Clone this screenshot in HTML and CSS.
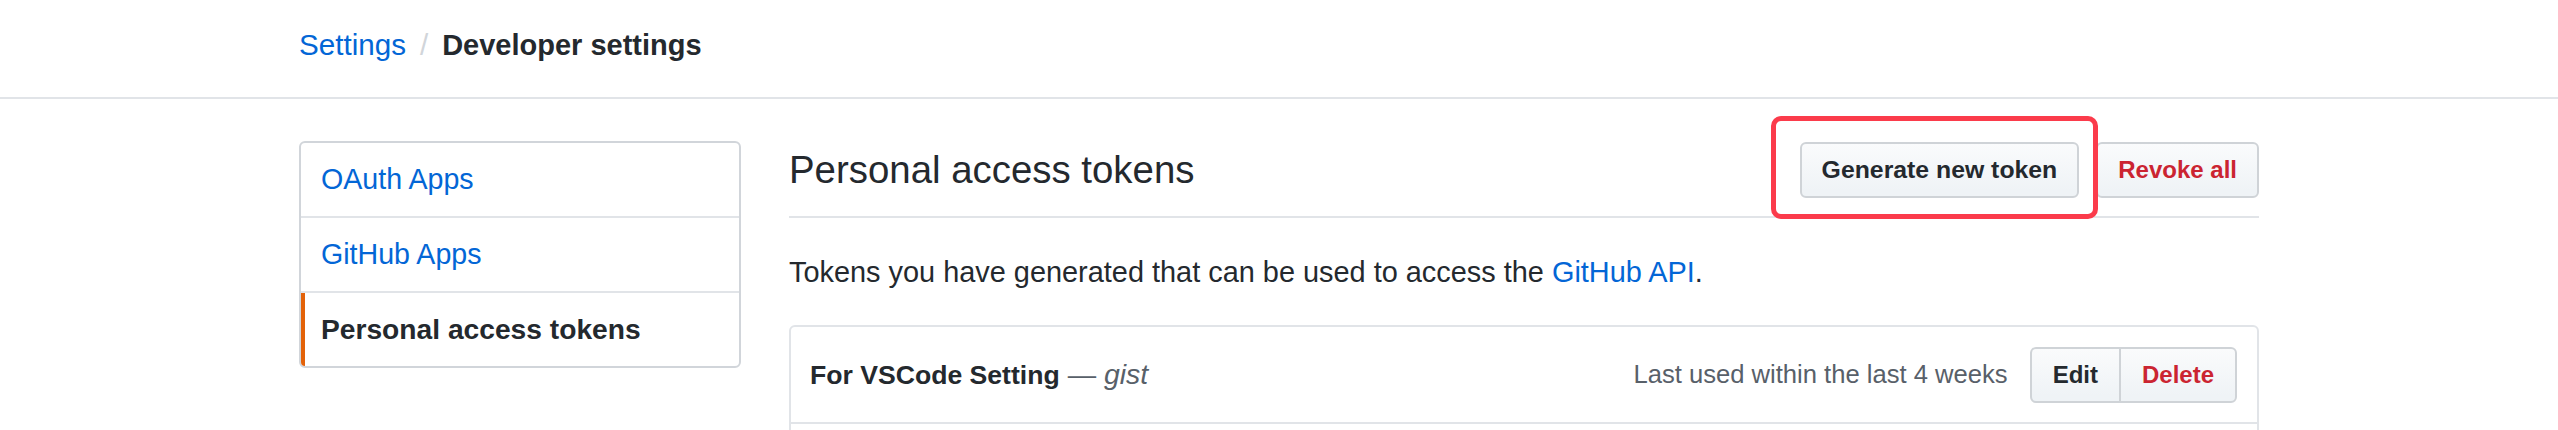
FILE: index.html
```html
<!DOCTYPE html>
<html lang="en">
<head>
<meta charset="utf-8">
<title>Personal access tokens</title>
<link rel="stylesheet" href="styles.css">
</head>
<body>
  <header class="header">
    <nav class="crumbs">
      <a class="crumb-link" href="#">Settings</a>
      <span class="crumb-sep">/</span>
      <strong class="crumb-current">Developer settings</strong>
    </nav>
  </header>

  <div class="layout">
    <aside class="sidebar">
      <nav class="menu">
        <a class="menu-item" href="#">OAuth Apps</a>
        <a class="menu-item" href="#">GitHub Apps</a>
        <a class="menu-item selected" href="#">Personal access tokens</a>
      </nav>
    </aside>

    <main class="main">
      <div class="subhead">
        <h2 class="subhead-heading">Personal access tokens</h2>
        <div class="actions">
          <div class="hl-wrap">
            <button class="btn btn-generate" type="button">Generate new token</button>
            <span class="highlight"></span>
          </div>
          <button class="btn btn-danger" type="button">Revoke all</button>
        </div>
      </div>

      <p class="lead">Tokens you have generated that can be used to access the <a class="link" href="#">GitHub API</a>.</p>

      <div class="box">
        <div class="token-row">
          <div class="token-title">
            <strong class="token-name">For VSCode Setting</strong>
            <span class="token-scope">— <em>gist</em></span>
          </div>
          <div class="token-meta">
            <span class="last-used">Last used within the last 4 weeks</span>
            <div class="btn-group">
              <button class="btn" type="button">Edit</button>
              <button class="btn btn-danger" type="button">Delete</button>
            </div>
          </div>
        </div>
      </div>
    </main>
  </div>
</body>
</html>
```

FILE: styles.css
```css
* {
  box-sizing: border-box;
}

body {
  margin: 0;
  background: #ffffff;
  color: #24292e;
  font-family: "Liberation Sans", Arial, Helvetica, sans-serif;
}

a {
  text-decoration: none;
}

/* Header / breadcrumbs */
.header {
  height: 99px;
  border-bottom: 2px solid #e1e4e8;
}

.crumbs {
  width: 1960px;
  margin: 0 auto;
  padding-top: 25px;
  display: flex;
  align-items: baseline;
  font-size: 29.6px;
  line-height: 40px;
}

.crumb-link {
  color: #0366d6;
}

.crumb-sep {
  color: #d1d5da;
  margin: 0 14px;
}

.crumb-current {
  font-weight: bold;
  font-size: 29px;
  color: #24292e;
}

/* Layout */
.layout {
  width: 1960px;
  margin: 0 auto;
  padding-top: 42px;
  display: grid;
  grid-template-columns: 490px 1470px;
}

/* Sidebar menu */
.menu {
  width: 442px;
  border: 2px solid #d1d5da;
  border-radius: 6px;
  overflow: hidden;
  display: flex;
  flex-direction: column;
}

.menu-item {
  position: relative;
  display: block;
  padding: 16px 20px;
  font-size: 28.6px;
  line-height: 41px;
  color: #0366d6;
  border-bottom: 2px solid #e1e4e8;
}

.menu-item:last-child {
  border-bottom: none;
}

.menu-item.selected {
  color: #24292e;
  font-weight: bold;
  font-size: 28.2px;
}

.menu-item.selected::before {
  content: "";
  position: absolute;
  left: 0;
  top: 0;
  bottom: 0;
  width: 4px;
  background: #e36209;
}

/* Subhead */
.subhead {
  display: flex;
  align-items: center;
  justify-content: space-between;
  height: 77px;
  padding-bottom: 17px;
  border-bottom: 2px solid #e1e4e8;
}

.subhead-heading {
  margin: 0;
  font-size: 38.4px;
  font-weight: normal;
  line-height: 58px;
  color: #24292e;
}

.actions {
  display: flex;
  align-items: center;
  gap: 17px;
}

.hl-wrap {
  position: relative;
  display: flex;
}

.highlight {
  position: absolute;
  top: -26px;
  left: -29px;
  right: -19px;
  bottom: -21px;
  border: 5px solid #fb3b4b;
  border-radius: 10px;
  pointer-events: none;
}

/* Buttons */
.btn {
  display: inline-block;
  margin: 0;
  padding: 6px 20px;
  font-family: inherit;
  font-size: 24px;
  font-weight: bold;
  line-height: 40px;
  color: #24292e;
  white-space: nowrap;
  background-color: #eff3f6;
  background-image: linear-gradient(-180deg, #fafbfc 0%, #eff3f6 90%);
  border: 2px solid #cfd3d7;
  border-radius: 6px;
  cursor: pointer;
}

.btn-generate {
  font-size: 24.8px;
}

.btn-danger {
  color: #cb2431;
}

.btn-group {
  display: flex;
}

.btn-group .btn:first-child {
  border-radius: 6px 0 0 6px;
}

.btn-group .btn + .btn {
  margin-left: -2px;
  border-radius: 0 6px 6px 0;
}

/* Lead text */
.lead {
  margin: 34px 0 33px;
  font-size: 28.9px;
  line-height: 40px;
  color: #24292e;
}

.link {
  color: #0366d6;
}

/* Token list */
.box {
  min-height: 200px;
  border: 2px solid #e1e4e8;
  border-radius: 6px;
}

.token-row {
  display: flex;
  align-items: center;
  justify-content: space-between;
  height: 97px;
  padding: 0 20px 0 19px;
  border-bottom: 2px solid #e1e4e8;
}

.token-title {
  display: flex;
  align-items: baseline;
  gap: 8px;
}

.token-name {
  font-size: 26.6px;
  font-weight: bold;
  color: #24292e;
}

.token-scope {
  font-size: 28.4px;
  color: #586069;
}

.token-meta {
  display: flex;
  align-items: center;
}

.last-used {
  margin-right: 22px;
  font-size: 25.6px;
  color: #586069;
}

.btn-group .btn {
  padding: 6px 21px;
}
```
